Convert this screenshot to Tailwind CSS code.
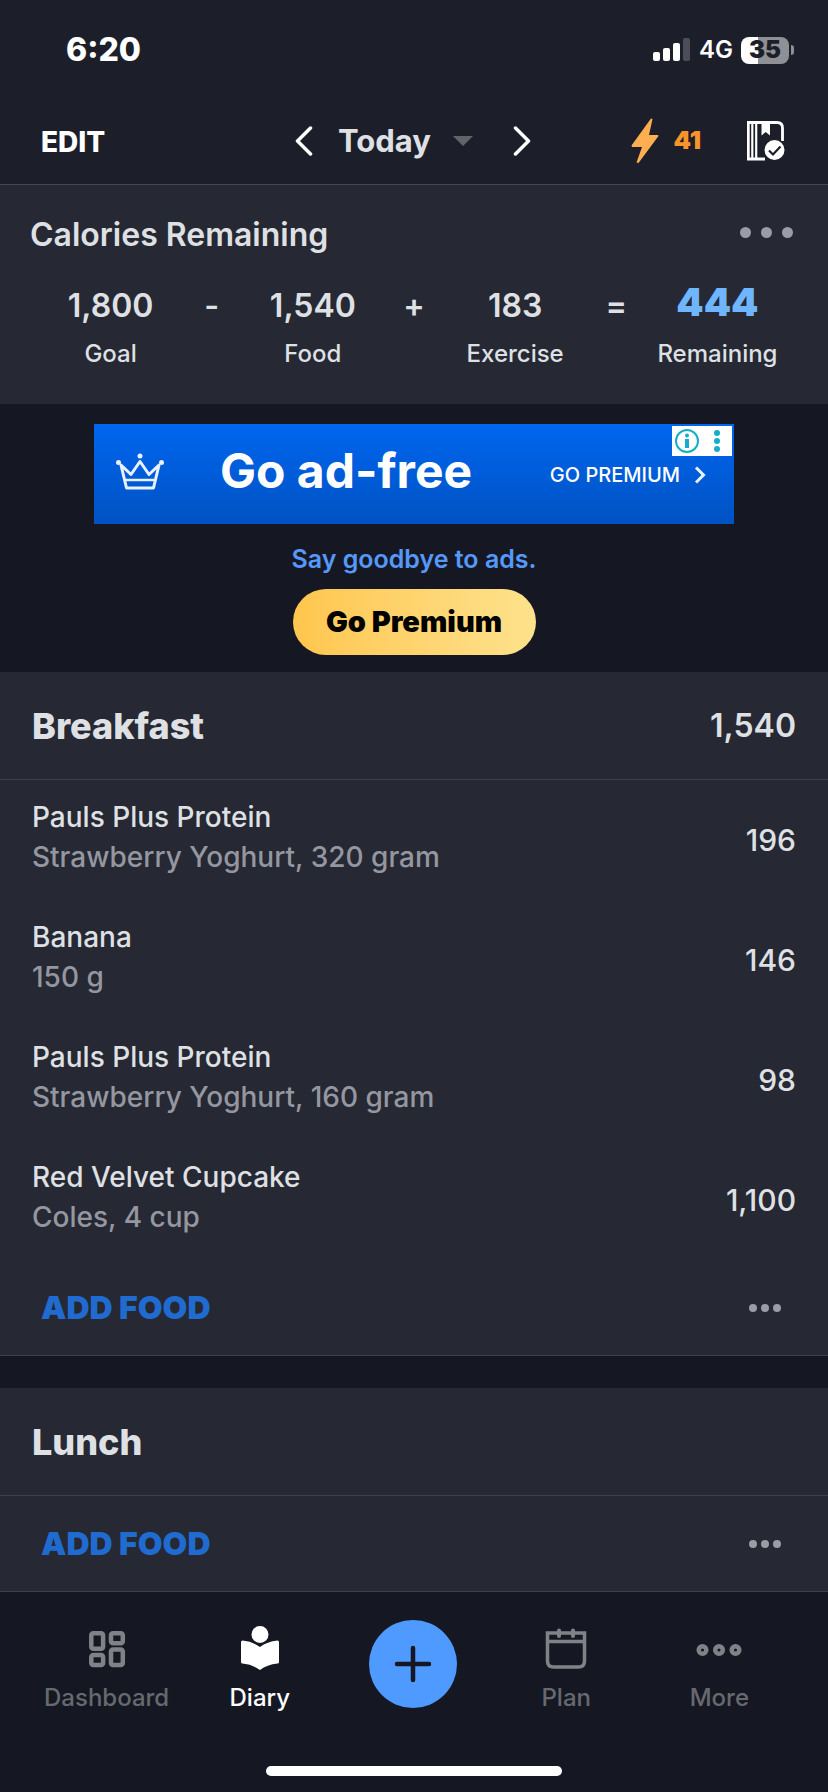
<!DOCTYPE html>
<html lang="en">
<head>
    <meta charset="UTF-8">
    <meta name="viewport" content="width=device-width, initial-scale=1.0">
    <title>Diary</title>
    <script src="https://cdn.jsdelivr.net/npm/@tailwindcss/browser@4"></script>
    <style>
        body { font-family: 'Inter', 'Liberation Sans', sans-serif; }
    </style>
</head>
<body class="bg-[#151823] text-[#dfe0e3] min-h-screen flex flex-col">

    <!-- Top bar -->
    <header class="bg-[#1c1f2a] border-b border-[#43454f]">
        <div class="h-[98px] pt-0.5 pl-[66px] pr-[34px] flex items-center justify-between text-white">
            <span class="text-[32px] font-extrabold">6:20</span>
            <div class="flex items-center gap-2">
                <svg class="w-[38px] h-6" viewBox="0 0 38 24" fill="#fff">
                    <rect x="0" y="14" width="7" height="9" rx="2"/>
                    <rect x="10" y="10" width="7" height="13" rx="2"/>
                    <rect x="20" y="5" width="7" height="18" rx="2"/>
                    <rect x="30" y="0" width="7" height="23" rx="2" fill="#4b4d59"/>
                </svg>
                <span class="text-2xl font-semibold">4G</span>
                <div class="flex items-center gap-0.5">
                    <div class="w-12 h-[27px] rounded-lg bg-linear-to-r from-white from-35% to-[#8e9096] to-35% flex items-center justify-center text-[#1c1f2a] text-2xl font-black">35</div>
                    <div class="w-[3px] h-2.5 rounded-r-full bg-[#8e9096]"></div>
                </div>
            </div>
        </div>
        <div class="h-[86px] pl-[41px] pr-[43px] grid grid-cols-[1fr_auto_1fr] items-center">
            <button class="justify-self-start pt-0.5 text-[28px] font-extrabold text-white">EDIT</button>
            <div class="flex items-center">
                <button aria-label="Previous day" class="mr-[25px]">
                    <svg class="w-[18px] h-[30px]" viewBox="0 0 18 30" fill="none" stroke="#fff" stroke-width="3.500" stroke-linecap="round" stroke-linejoin="round"><path d="M15.500 2L2.500 15L15.500 28"/></svg>
                </button>
                <button class="flex items-center gap-[22px] text-[31px] font-bold">
                    Today
                    <svg class="w-5 h-2.5" viewBox="0 0 20 10" fill="#63646a"><path d="M0 0H20L10 10Z"/></svg>
                </button>
                <button aria-label="Next day" class="ml-10">
                    <svg class="w-[18px] h-[30px]" viewBox="0 0 18 30" fill="none" stroke="#fff" stroke-width="3.500" stroke-linecap="round" stroke-linejoin="round"><path d="M2.500 2L15.500 15L2.500 28"/></svg>
                </button>
            </div>
            <div class="justify-self-end flex items-center">
                <svg class="w-7 h-[46px]" viewBox="0 0 28 46" fill="#ffae52"><path d="M20 0.500L21.500 1L18 17H27L27.500 18L7.500 45L5.500 44.500L11 29H1L0.500 27.500Z"/></svg>
                <span class="ml-3.5 text-[25px] font-black text-[#f7942a]">41</span>
                <button aria-label="Complete diary" class="ml-[46px]">
                    <svg class="w-[38px] h-10" viewBox="0 0 38 40" fill="none">
                        <path d="M1.300 1.500H30Q35.500 1.500 35.500 7V20M1.300 0V38H18" stroke="#fff" stroke-width="2.800"/>
                        <path d="M5.300 1V38M9.200 1V38" stroke="#fff" stroke-width="2.200"/>
                        <path d="M14.500 1H23V14.500L18.700 11L14.500 14.500Z" fill="#fff"/>
                        <circle cx="27.500" cy="29" r="11.500" fill="#1c1f2a"/>
                        <circle cx="27.500" cy="29" r="10" fill="#fff"/>
                        <path d="M22 29.500L26 33.500L33.500 25.500" stroke="#1c1f2a" stroke-width="2.200"/>
                    </svg>
                </button>
            </div>
        </div>
    </header>

    <main class="grow">
        <!-- Calories summary -->
        <section class="bg-[#262833] pt-[30px] pb-[34px]">
            <div class="h-10 pl-[30px] pr-[35px] flex items-center justify-between">
                <h2 class="text-[32px] font-semibold">Calories Remaining</h2>
                <button aria-label="Summary options" class="pb-1.5 flex gap-2.5">
                    <span class="size-[11px] rounded-full bg-[#9b9ca6]"></span>
                    <span class="size-[11px] rounded-full bg-[#9b9ca6]"></span>
                    <span class="size-[11px] rounded-full bg-[#9b9ca6]"></span>
                </button>
            </div>
            <div class="mt-[27px] px-[60px] grid grid-cols-7 text-[32px] leading-[48px] font-semibold">
                <div class="flex flex-col items-center gap-2">
                    <span>1,800</span>
                    <span class="text-2xl leading-8 font-medium">Goal</span>
                </div>
                <span class="text-center">-</span>
                <div class="flex flex-col items-center gap-2">
                    <span>1,540</span>
                    <span class="text-2xl leading-8 font-medium">Food</span>
                </div>
                <span class="text-center">+</span>
                <div class="flex flex-col items-center gap-2">
                    <span>183</span>
                    <span class="text-2xl leading-8 font-medium">Exercise</span>
                </div>
                <span class="text-center">=</span>
                <div class="flex flex-col items-center gap-2">
                    <span class="h-12 leading-10 text-[39px] font-black text-[#6fb6ff]">444</span>
                    <span class="text-2xl leading-8 font-medium">Remaining</span>
                </div>
            </div>
        </section>

        <!-- Ad -->
        <section class="pt-5 pb-[17px] flex flex-col items-center">
            <div class="relative w-full max-w-[640px] h-[100px] pl-[22px] pr-7 bg-linear-to-b from-[#0066f0] to-[#0052c2] text-white flex items-center">
                <svg class="w-12 h-10 mb-1" viewBox="0 0 48 40" fill="none" stroke="#e8f1ff" stroke-width="3" stroke-linejoin="round">
                    <path d="M5 13L10.500 36H37.500L43 13L33 22.500L24 9.500L15 22.500Z"/>
                    <path d="M9 28H39" stroke-width="2.500"/>
                    <g fill="#e8f1ff" stroke="none"><circle cx="2.500" cy="10.500" r="2.500"/><circle cx="24" cy="4" r="2.500"/><circle cx="45.500" cy="10.500" r="2.500"/></g>
                </svg>
                <span class="ml-14 pb-1.5 text-5xl font-bold">Go ad-free</span>
                <a href="#" class="ml-auto pt-0.5 flex items-center gap-3.5 text-xl font-medium">
                    GO PREMIUM
                    <svg class="w-3 h-[18px]" viewBox="0 0 12 18" fill="none" stroke="#e8f1ff" stroke-width="3"><path d="M2 1.500L9.500 9L2 16.500"/></svg>
                </a>
                <div class="absolute top-0.5 right-0.5 w-[60px] h-[30px] bg-white">
                    <svg viewBox="0 0 60 30" fill="#12aecb">
                        <circle cx="15" cy="15" r="11" fill="none" stroke="#12aecb" stroke-width="2"/>
                        <circle cx="15" cy="9.500" r="2"/>
                        <rect x="13" y="13" width="4" height="9"/>
                        <circle cx="45" cy="7" r="3"/><circle cx="45" cy="15" r="3"/><circle cx="45" cy="23" r="3"/>
                    </svg>
                </div>
            </div>
            <a href="#" class="mt-[19px] text-[25px] leading-8 font-semibold text-[#5598f8]">Say goodbye to ads.</a>
            <button class="mt-3.5 w-[243px] h-[66px] rounded-full bg-linear-to-r from-[#ffc64d] to-[#fde28c] text-[29px] font-black text-black">Go Premium</button>
        </section>

        <!-- Breakfast -->
        <section class="bg-[#262833] border-b border-[#3e404b]">
            <div class="h-[108px] px-8 border-b border-[#3e404b] flex items-center justify-between">
                <h2 class="text-4xl font-extrabold">Breakfast</h2>
                <span class="text-[32px] font-semibold">1,540</span>
            </div>
            <ul class="text-[28px] font-medium">
                <li class="h-[120px] px-8 flex items-center justify-between">
                    <div class="pb-1.5 leading-10">
                        <p>Pauls Plus Protein</p>
                        <p class="text-[#9597a0]">Strawberry Yoghurt, 320 gram</p>
                    </div>
                    <span class="text-[30px]">196</span>
                </li>
                <li class="h-[120px] px-8 flex items-center justify-between">
                    <div class="pb-1.5 leading-10">
                        <p>Banana</p>
                        <p class="text-[#9597a0]">150 g</p>
                    </div>
                    <span class="text-[30px]">146</span>
                </li>
                <li class="h-[120px] px-8 flex items-center justify-between">
                    <div class="pb-1.5 leading-10">
                        <p>Pauls Plus Protein</p>
                        <p class="text-[#9597a0]">Strawberry Yoghurt, 160 gram</p>
                    </div>
                    <span class="text-[30px]">98</span>
                </li>
                <li class="h-[120px] px-8 flex items-center justify-between">
                    <div class="pb-1.5 leading-10">
                        <p>Red Velvet Cupcake</p>
                        <p class="text-[#9597a0]">Coles, 4 cup</p>
                    </div>
                    <span class="text-[30px]">1,100</span>
                </li>
            </ul>
            <div class="h-[95px] pl-[41px] pr-[47px] flex items-center justify-between">
                <button class="text-[32px] font-black text-[#206bd0]">ADD FOOD</button>
                <button aria-label="Breakfast options" class="flex gap-1">
                    <span class="size-2 rounded-full bg-[#9b9ca6]"></span>
                    <span class="size-2 rounded-full bg-[#9b9ca6]"></span>
                    <span class="size-2 rounded-full bg-[#9b9ca6]"></span>
                </button>
            </div>
        </section>

        <!-- Lunch -->
        <section class="mt-8 bg-[#262833]">
            <div class="h-[108px] px-8 border-b border-[#3e404b] flex items-center justify-between">
                <h2 class="text-4xl font-extrabold">Lunch</h2>
            </div>
            <div class="h-[95px] pl-[41px] pr-[47px] flex items-center justify-between">
                <button class="text-[32px] font-black text-[#206bd0]">ADD FOOD</button>
                <button aria-label="Lunch options" class="flex gap-1">
                    <span class="size-2 rounded-full bg-[#9b9ca6]"></span>
                    <span class="size-2 rounded-full bg-[#9b9ca6]"></span>
                    <span class="size-2 rounded-full bg-[#9b9ca6]"></span>
                </button>
            </div>
        </section>
    </main>

    <!-- Tab bar -->
    <footer class="sticky bottom-0 bg-[#151823] border-t border-[#3e404b] pb-4">
        <nav class="pl-[30px] pr-8 pt-7 grid grid-cols-5 text-2xl leading-8 font-medium text-[#67696f]">
            <a href="#" class="pt-1.5 flex flex-col items-center gap-3">
                <svg class="size-11" viewBox="0 0 44 44" fill="none" stroke="#808287" stroke-width="4.500">
                    <rect x="6.300" y="7.300" width="11.800" height="15.500" rx="2"/>
                    <rect x="26" y="7.300" width="11.800" height="10" rx="2"/>
                    <rect x="6.300" y="29" width="11.800" height="10" rx="2"/>
                    <rect x="26" y="23.500" width="11.800" height="15.500" rx="2"/>
                </svg>
                Dashboard
            </a>
            <a href="#" class="pt-1.5 flex flex-col items-center gap-3 text-white">
                <svg class="size-11" viewBox="0 0 44 44" fill="#fff">
                    <circle cx="22" cy="8.500" r="8.500"/>
                    <path d="M3 16Q3 14.500 4.500 14.500Q15 15.500 22 21Q29 15.500 39.500 14.500Q41 14.500 41 16V36Q41 37.500 39.500 37.500Q29 38.500 22 44Q15 38.500 4.500 37.500Q3 37.500 3 36Z"/>
                </svg>
                Diary
            </a>
            <button aria-label="Add" class="justify-self-center size-[88px] rounded-full bg-[#4f9aff] flex items-center justify-center">
                <svg class="size-10" viewBox="0 0 40 40" stroke="#151823" stroke-width="4.500" stroke-linecap="round"><path d="M20 4V36M4 20H36"/></svg>
            </button>
            <a href="#" class="pt-1.5 flex flex-col items-center gap-3">
                <svg class="size-11" viewBox="0 0 44 44" fill="none" stroke="#808287" stroke-width="3.500">
                    <path d="M3.500 7H40.500V35Q40.500 41 34.500 41H9.500Q3.500 41 3.500 35ZM3.500 15.500H40.500"/>
                    <path d="M15 4.500V10M29 4.500V10" stroke-width="4" stroke-linecap="round"/>
                </svg>
                Plan
            </a>
            <a href="#" class="pt-1.5 flex flex-col items-center gap-3">
                <svg class="w-12 h-11" viewBox="0 0 48 44" fill="none" stroke="#808287" stroke-width="4.500">
                    <circle cx="7.500" cy="24" r="3.800"/><circle cx="24" cy="24" r="3.800"/><circle cx="40.500" cy="24" r="3.800"/>
                </svg>
                More
            </a>
        </nav>
        <div class="mt-[52px] mx-auto w-[296px] h-2.5 rounded-full bg-white"></div>
    </footer>

</body>
</html>
